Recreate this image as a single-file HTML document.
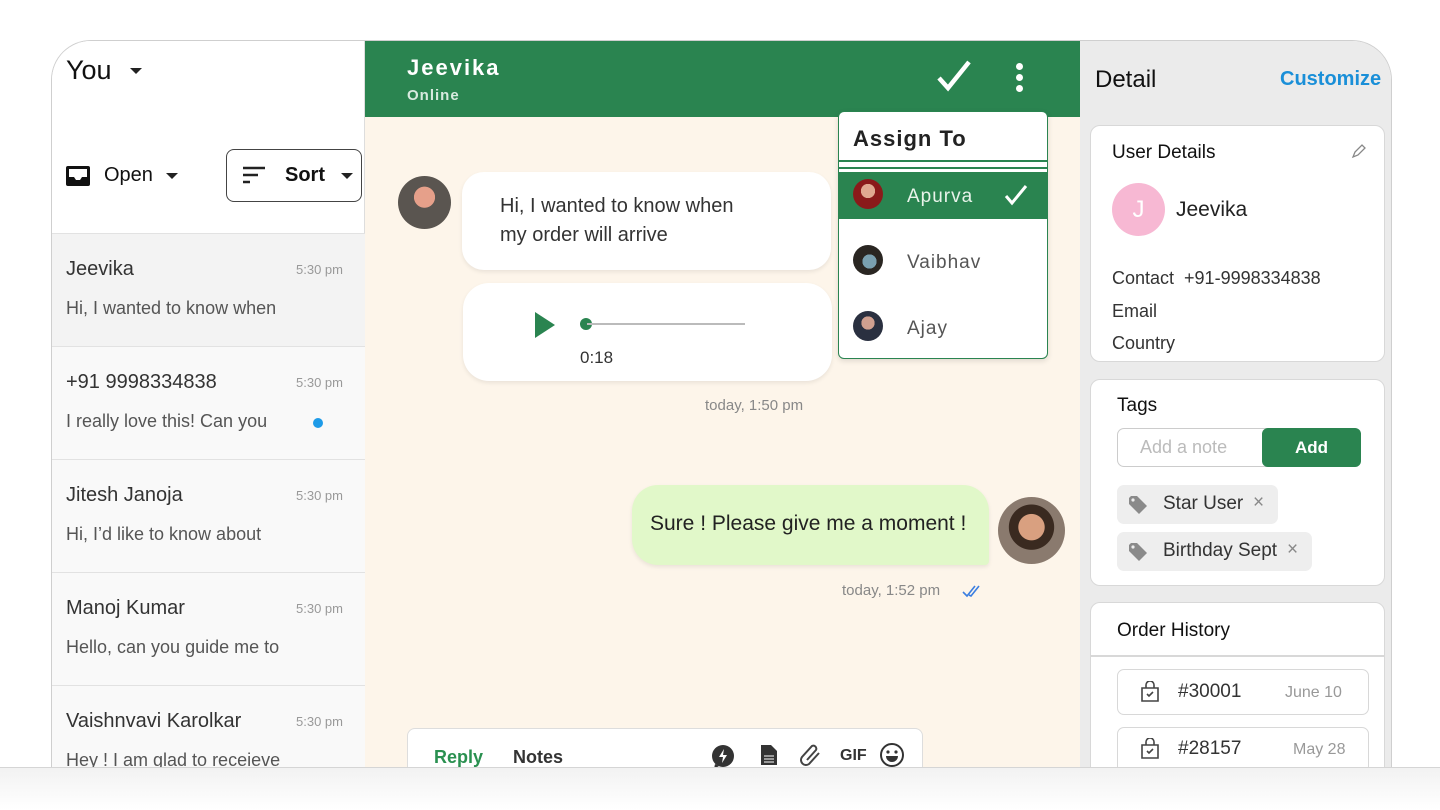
<!DOCTYPE html>
<html><head><meta charset="utf-8"><style>
*{margin:0;padding:0;box-sizing:border-box}
body{width:1440px;height:810px;background:#fff;font-family:"Liberation Sans",sans-serif;position:relative;overflow:hidden}
.a{position:absolute}
#frame{left:51px;top:40px;width:1341px;height:727px;border:1.5px solid #cfcfcf;border-bottom:none;border-radius:40px 40px 0 0;overflow:hidden;background:#fff}
.item{position:absolute;left:0;width:313px;height:113px;border-top:1px solid #e2e2e2;background:#f9f9f9}
.item .n{position:absolute;left:14px;top:24px;font-size:20px;color:#333}
.item .t{position:absolute;right:22px;top:28px;font-size:13px;color:#999}
.item .m{position:absolute;left:14px;top:64px;font-size:18px;color:#555}
.card{position:absolute;background:#fff;border:1.5px solid #d8d8d8;border-radius:10px}
.av{position:absolute;border-radius:50%}
</style></head><body>
<div id="frame" class="a">
 <div class="a" style="left:0;top:0;width:313px;height:727px;background:#fff;border-right:1px solid #ddd"></div>
 <div class="a" style="left:14px;top:14px;font-size:27px;color:#111">You</div>
 <div class="a" style="left:78px;top:27px;border:6px solid transparent;border-top:6px solid #222"></div>
 <svg class="a" style="left:13px;top:124px" width="26" height="22" viewBox="0 0 26 22"><rect x="1" y="1" width="24" height="20" rx="2" fill="#111"/><path d="M4 4h18v8h-5l-2 3h-4l-2-3H4z" fill="#fff"/></svg>
 <div class="a" style="left:52px;top:123px;font-size:20px;color:#111">Open</div>
 <div class="a" style="left:114px;top:132px;border:6px solid transparent;border-top:6px solid #222"></div>
 <div class="a" style="left:174px;top:108px;width:136px;height:53px;border:1.5px solid #444;border-radius:8px"></div>
 <svg class="a" style="left:190px;top:124px" width="26" height="20"><path d="M1 3h22M1 10h15M1 17h7" stroke="#222" stroke-width="2.5"/></svg>
 <div class="a" style="left:233px;top:123px;font-size:20px;font-weight:bold;color:#111">Sort</div>
 <div class="a" style="left:289px;top:132px;border:6px solid transparent;border-top:6px solid #222"></div>
 <div class="item" style="top:192px;background:#f3f3f3"><span class="n">Jeevika</span><span class="t">5:30 pm</span><span class="m">Hi, I wanted to know when</span></div>
 <div class="item" style="top:305px"><span class="n">+91 9998334838</span><span class="t">5:30 pm</span><span class="m">I really love this! Can you</span><span class="a" style="left:261px;top:71px;width:10px;height:10px;border-radius:50%;background:#1e9be8"></span></div>
 <div class="item" style="top:418px"><span class="n">Jitesh Janoja</span><span class="t">5:30 pm</span><span class="m">Hi, I’d like to know about</span></div>
 <div class="item" style="top:531px"><span class="n">Manoj Kumar</span><span class="t">5:30 pm</span><span class="m">Hello, can you guide me to</span></div>
 <div class="item" style="top:644px"><span class="n">Vaishnvavi Karolkar</span><span class="t">5:30 pm</span><span class="m">Hey ! I am glad to receieve</span></div>

 <div class="a" style="left:313px;top:0;width:715px;height:727px;background:#fdf5ea"></div>
 <div class="a" style="left:313px;top:0;width:715px;height:76px;background:#2a8450"></div>
 <div class="a" style="left:355px;top:14px;font-size:22px;font-weight:bold;color:#fff;letter-spacing:2px">Jeevika</div>
 <div class="a" style="left:355px;top:46px;font-size:15px;font-weight:bold;color:#d8eadf;letter-spacing:1px">Online</div>
 <svg class="a" style="left:884px;top:18px" width="36" height="36"><path d="M3 19l9 10L33 3" stroke="#fff" stroke-width="4.5" fill="none"/></svg>
 <div class="a" style="left:964px;top:22px;width:7px;height:7px;border-radius:50%;background:#fff;box-shadow:0 11px 0 #fff,0 22px 0 #fff"></div>

 <div class="av" style="left:346px;top:135px;width:53px;height:53px;background:radial-gradient(circle at 50% 40%,#e6a08a 0 25%,#5a5550 26%)"></div>
 <div class="a" style="left:410px;top:131px;width:369px;height:98px;background:#fff;border-radius:22px;box-shadow:0 2px 4px rgba(0,0,0,.08)"></div>
 <div class="a" style="left:448px;top:151px;font-size:20px;color:#333;line-height:29px">Hi, I wanted to know when<br>my order will arrive</div>
 <div class="a" style="left:411px;top:242px;width:369px;height:98px;background:#fff;border-radius:26px;box-shadow:0 2px 4px rgba(0,0,0,.08)"></div>
 <div class="a" style="left:483px;top:271px;border-left:20px solid #2a8450;border-top:13px solid transparent;border-bottom:13px solid transparent"></div>
 <div class="a" style="left:528px;top:277px;width:12px;height:12px;border-radius:50%;background:#2a8450"></div>
 <div class="a" style="left:535px;top:282px;width:158px;height:2px;background:#bbb"></div>
 <div class="a" style="left:528px;top:307px;font-size:17px;color:#333">0:18</div>
 <div class="a" style="left:653px;top:356px;font-size:15px;color:#888">today, 1:50 pm</div>

 <div class="a" style="left:580px;top:444px;width:357px;height:80px;background:#e1f8c9;border-radius:26px 26px 4px 26px;box-shadow:0 2px 4px rgba(0,0,0,.08)"></div>
 <div class="a" style="left:598px;top:471px;font-size:21px;color:#222">Sure ! Please give me a moment !</div>
 <div class="av" style="left:946px;top:456px;width:67px;height:67px;background:radial-gradient(circle at 50% 45%,#d9a080 0 26%,#3a2a20 27% 45%,#8a7a6e 46%)"></div>
 <div class="a" style="left:790px;top:541px;font-size:15px;color:#888">today, 1:52 pm</div>
 <svg class="a" style="left:910px;top:543px" width="22" height="14"><path d="M1 8l4 4 8-10M7 11l2 1 8-10" stroke="#3b7ee0" stroke-width="1.6" fill="none"/></svg>

 <div class="a" style="left:355px;top:687px;width:516px;height:60px;background:#fff;border:1.5px solid #ddd;border-radius:8px"></div>
 <div class="a" style="left:382px;top:706px;font-size:18px;font-weight:bold;color:#2a9050">Reply</div>
 <div class="a" style="left:461px;top:706px;font-size:18px;font-weight:bold;color:#333">Notes</div>
 <svg class="a" style="left:659px;top:703px" width="24" height="26"><circle cx="12" cy="12" r="11" fill="#333"/><path d="M4 20l-1 5 5-3z" fill="#333"/><path d="M13 5l-5 8h4l-1 6 5-8h-4z" fill="#fff"/></svg>
 <svg class="a" style="left:708px;top:703px" width="18" height="22"><path d="M1 1h10l6 6v14H1z" fill="#333"/><path d="M4 12h10M4 15h10M4 18h10" stroke="#fff" stroke-width="1"/></svg>
 <svg class="a" style="left:747px;top:701px" width="24" height="26"><path d="M8 18l9-10a3 3 0 0 0-4-4L3 15a5 5 0 0 0 7 7l10-11" stroke="#444" stroke-width="2" fill="none"/></svg>
 <div class="a" style="left:788px;top:706px;font-size:16px;font-weight:bold;color:#333">GIF</div>
 <svg class="a" style="left:827px;top:701px" width="26" height="26"><circle cx="13" cy="13" r="11" stroke="#333" stroke-width="2" fill="none"/><circle cx="9" cy="10" r="1.6" fill="#333"/><circle cx="17" cy="10" r="1.6" fill="#333"/><path d="M7 14h12a6 6 0 0 1-12 0z" fill="#333"/></svg>

 <div class="a" style="left:786px;top:70px;width:210px;height:248px;background:#fff;border:1.5px solid #2a8450;border-radius:6px;box-shadow:0 2px 6px rgba(0,0,0,.12)"></div>
 <div class="a" style="left:801px;top:85px;font-size:22px;font-weight:bold;color:#222;letter-spacing:1px">Assign To</div>
 <div class="a" style="left:787px;top:119px;width:208px;height:2px;background:#2a8450"></div>
 <div class="a" style="left:787px;top:126px;width:208px;height:2px;background:#2a8450"></div>
 <div class="a" style="left:787px;top:131px;width:208px;height:47px;background:#2a8450"></div>
 <div class="av" style="left:801px;top:138px;width:30px;height:30px;background:radial-gradient(circle at 50% 40%,#e0a890 0 30%,#8a1a1a 31%)"></div>
 <div class="a" style="left:855px;top:145px;font-size:19px;color:#e8f3ea;letter-spacing:1px">Apurva</div>
 <svg class="a" style="left:952px;top:142px" width="24" height="24"><path d="M2 13l6 7L22 3" stroke="#fff" stroke-width="3" fill="none"/></svg>
 <div class="av" style="left:801px;top:204px;width:30px;height:30px;background:radial-gradient(circle at 55% 55%,#7aa0b0 0 30%,#2a2622 31%)"></div>
 <div class="a" style="left:855px;top:211px;font-size:19px;color:#555;letter-spacing:1px">Vaibhav</div>
 <div class="av" style="left:801px;top:270px;width:30px;height:30px;background:radial-gradient(circle at 50% 40%,#d0a090 0 28%,#2a3040 29%)"></div>
 <div class="a" style="left:855px;top:277px;font-size:19px;color:#555;letter-spacing:1px">Ajay</div>

 <div class="a" style="left:1028px;top:0;width:313px;height:727px;background:#ebebeb"></div>
 <div class="a" style="left:1043px;top:25px;font-size:24px;color:#111">Detail</div>
 <div class="a" style="left:1228px;top:27px;font-size:20px;font-weight:bold;color:#1a8fd8">Customize</div>
 <div class="card" style="left:1038px;top:84px;width:295px;height:237px"></div>
 <div class="a" style="left:1060px;top:101px;font-size:19px;color:#111">User Details</div>
 <svg class="a" style="left:1299px;top:102px" width="16" height="16"><path d="M2 14l2-5 7-7 3 3-7 7z" stroke="#888" stroke-width="1.3" fill="none"/></svg>
 <div class="av" style="left:1060px;top:142px;width:53px;height:53px;background:#f7b8d3;color:#fff;font-size:24px;text-align:center;line-height:53px">J</div>
 <div class="a" style="left:1124px;top:157px;font-size:21px;color:#222">Jeevika</div>
 <div class="a" style="left:1060px;top:221px;font-size:18px;color:#333;line-height:32.5px">Contact&nbsp; +91-9998334838<br>Email<br>Country</div>

 <div class="card" style="left:1038px;top:338px;width:295px;height:207px"></div>
 <div class="a" style="left:1065px;top:354px;font-size:19px;color:#111">Tags</div>
 <div class="a" style="left:1065px;top:387px;width:244px;height:39px;border:1.5px solid #ccc;border-radius:7px;background:#fff"></div>
 <div class="a" style="left:1088px;top:396px;font-size:18px;color:#bbb">Add a note</div>
 <div class="a" style="left:1210px;top:387px;width:99px;height:39px;background:#2a8450;border-radius:6px;color:#fff;font-weight:bold;font-size:17px;text-align:center;line-height:39px">Add</div>
 <div class="a" style="left:1065px;top:444px;width:161px;height:39px;background:#eee;border-radius:7px"></div>
 <div class="a" style="left:1065px;top:491px;width:195px;height:39px;background:#eee;border-radius:7px"></div>
 <svg class="a" style="left:1076px;top:454px" width="20" height="20"><path d="M1 3v6l10 10 8-8L9 1H3z" fill="#8a8a8a"/><circle cx="5" cy="5" r="1.6" fill="#eee"/></svg>
 <div class="a" style="left:1111px;top:452px;font-size:19px;color:#333">Star User</div>
 <div class="a" style="left:1201px;top:451px;font-size:19px;color:#888">×</div>
 <svg class="a" style="left:1076px;top:501px" width="20" height="20"><path d="M1 3v6l10 10 8-8L9 1H3z" fill="#8a8a8a"/><circle cx="5" cy="5" r="1.6" fill="#eee"/></svg>
 <div class="a" style="left:1111px;top:499px;font-size:19px;color:#333">Birthday Sept</div>
 <div class="a" style="left:1235px;top:498px;font-size:19px;color:#888">×</div>

 <div class="card" style="left:1038px;top:561px;width:295px;height:200px"></div>
 <div class="a" style="left:1065px;top:579px;font-size:19px;color:#111">Order History</div>
 <div class="a" style="left:1039px;top:614px;width:293px;height:1.5px;background:#d8d8d8"></div>
 <div class="a" style="left:1065px;top:628px;width:252px;height:46px;border:1.5px solid #d8d8d8;border-radius:7px;background:#fff"></div>
 <div class="a" style="left:1065px;top:686px;width:252px;height:46px;border:1.5px solid #d8d8d8;border-radius:7px;background:#fff"></div>
 <svg class="a" style="left:1088px;top:640px" width="20" height="22"><path d="M2 7h16v13H2zM6 7V4a4 4 0 0 1 8 0v3M7 13l2 2 4-4" stroke="#444" stroke-width="1.6" fill="none"/></svg>
 <div class="a" style="left:1126px;top:640px;font-size:19px;color:#333">#30001</div>
 <div class="a" style="left:1233px;top:643px;font-size:16px;color:#999">June 10</div>
 <svg class="a" style="left:1088px;top:697px" width="20" height="22"><path d="M2 7h16v13H2zM6 7V4a4 4 0 0 1 8 0v3M7 13l2 2 4-4" stroke="#444" stroke-width="1.6" fill="none"/></svg>
 <div class="a" style="left:1126px;top:697px;font-size:19px;color:#333">#28157</div>
 <div class="a" style="left:1241px;top:700px;font-size:16px;color:#999">May 28</div>
</div>
<div class="a" style="left:0;top:767px;width:1440px;height:43px;background:linear-gradient(#f2f2f2,#fff);border-top:1px solid #d5d5d5"></div>
</body></html>
